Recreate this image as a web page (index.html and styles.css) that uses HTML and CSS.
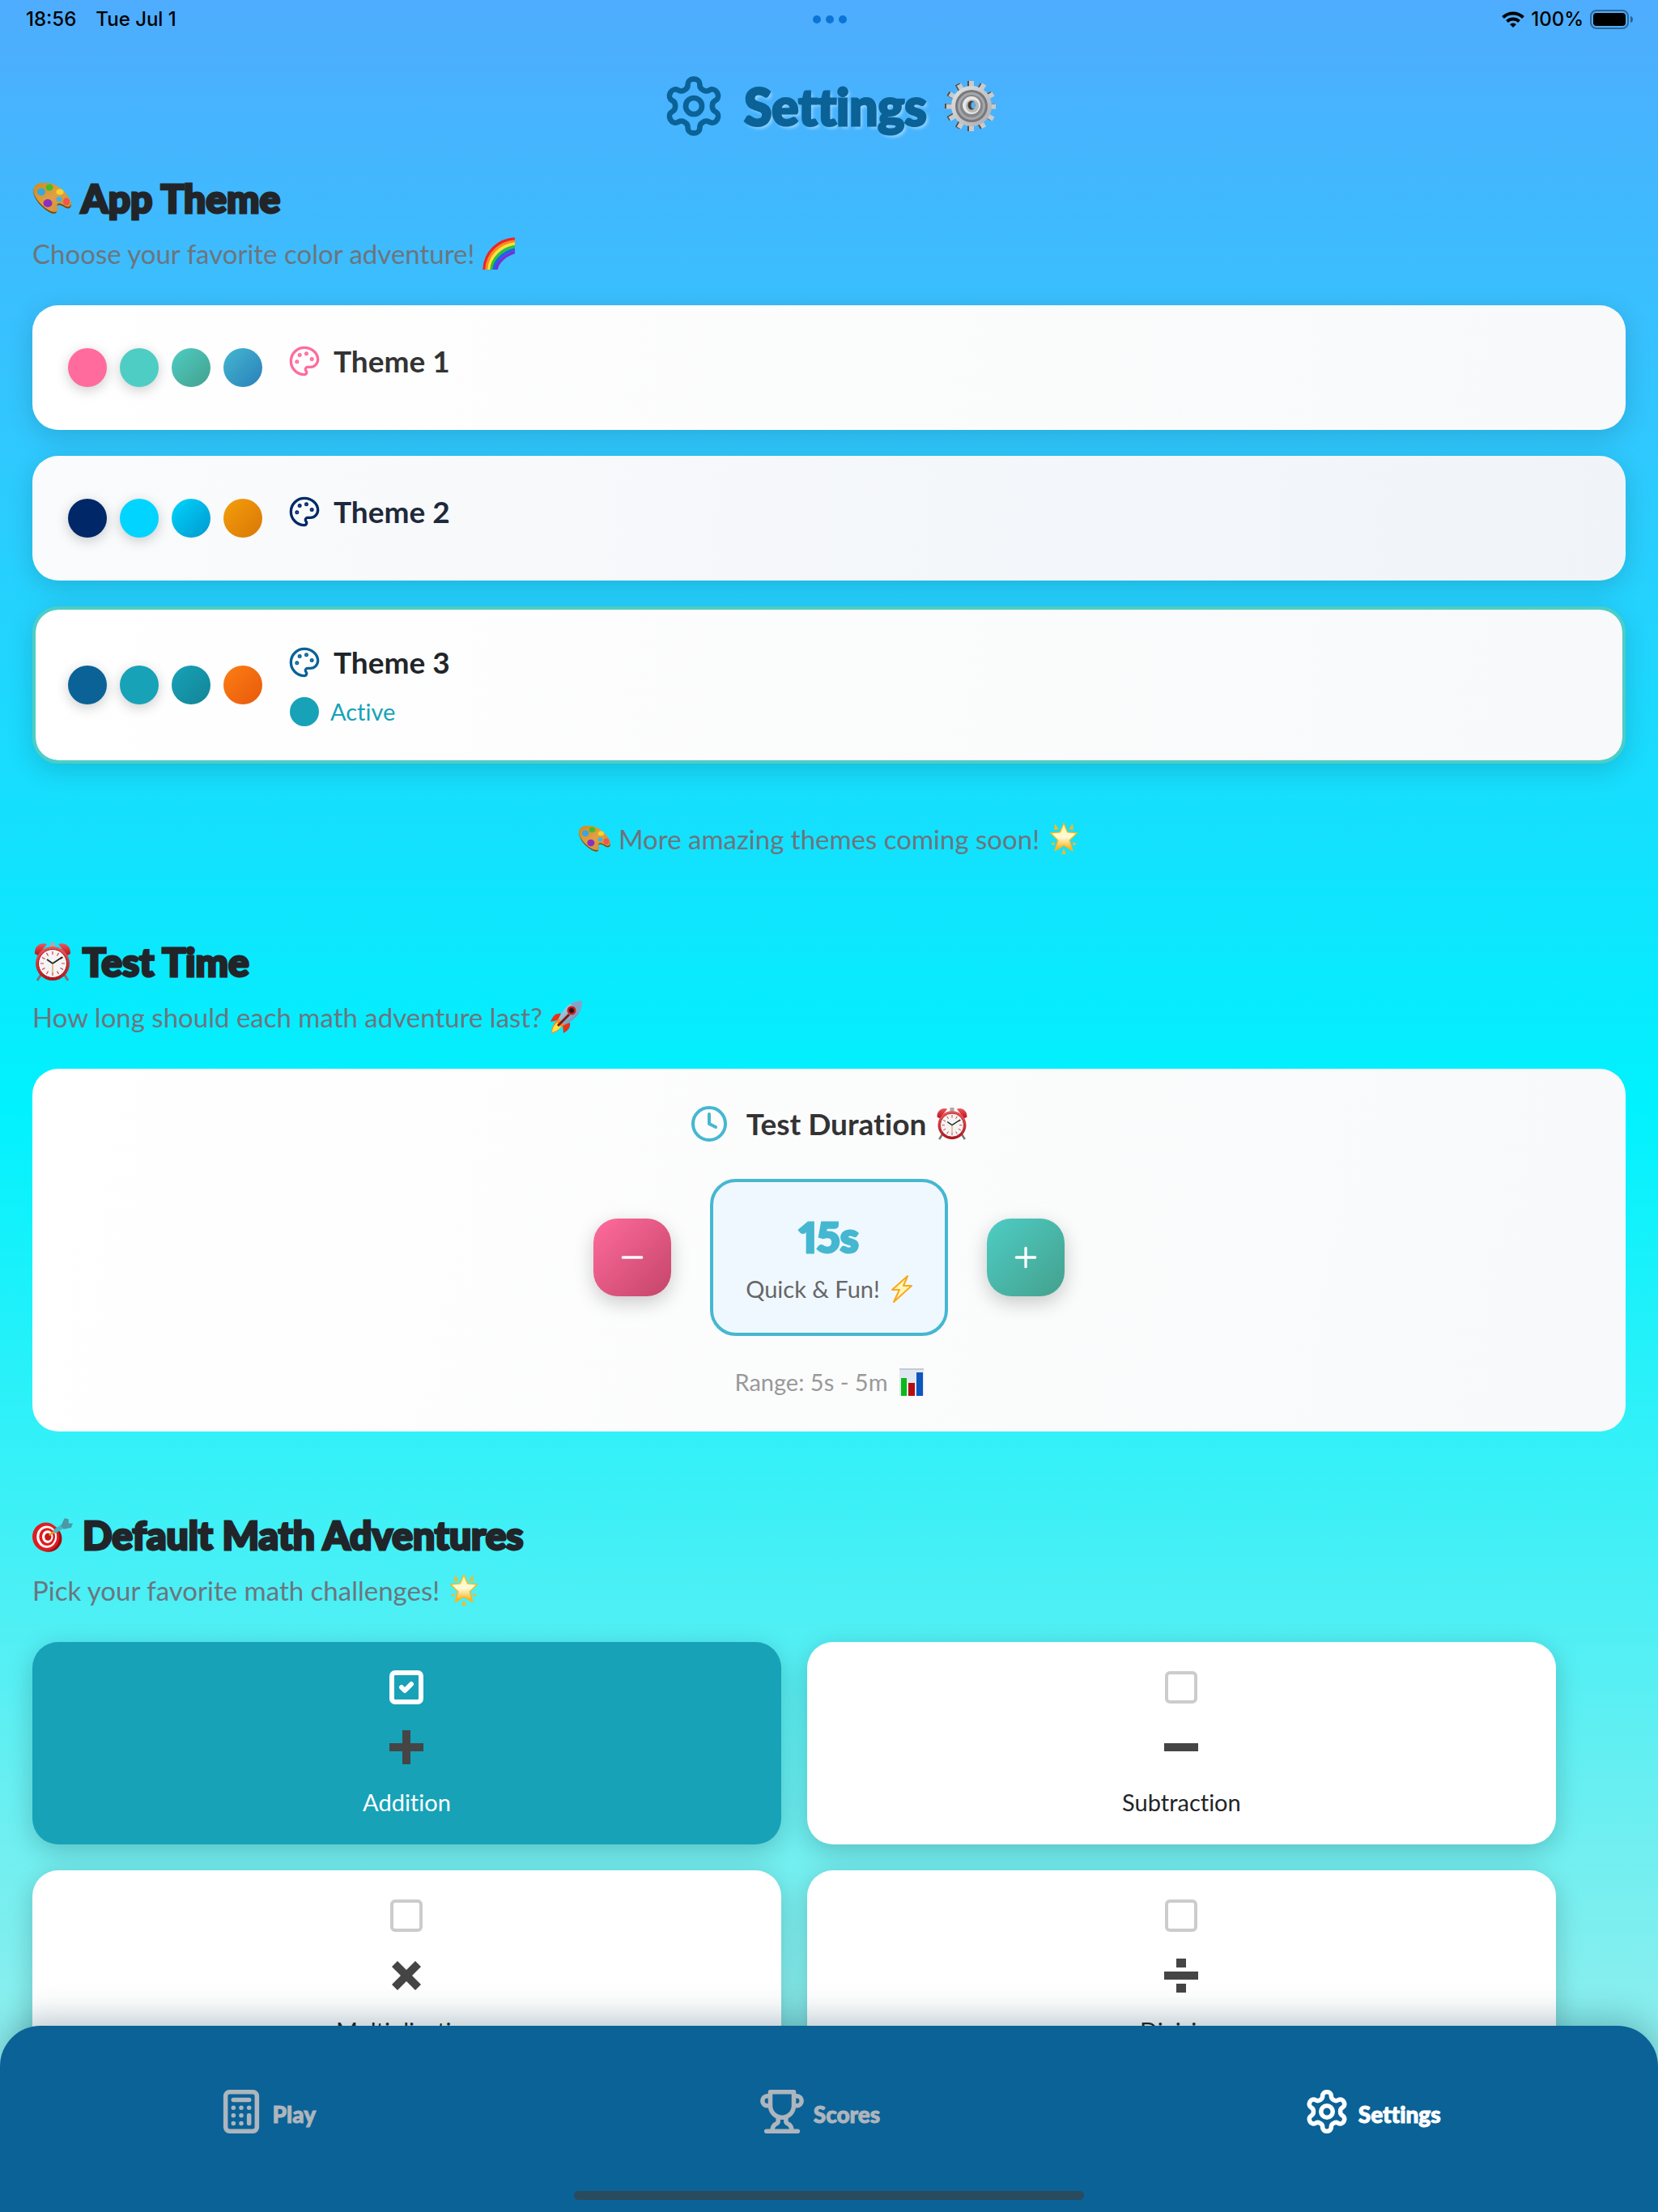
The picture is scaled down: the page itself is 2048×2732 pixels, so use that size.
FILE: index.html
```html
<!DOCTYPE html>
<html lang="en">
<head>
<meta charset="utf-8">
<meta name="viewport" content="width=device-width, initial-scale=1">
<title>Settings</title>
<link rel="stylesheet" href="styles.css">
</head>
<body>
<svg class="sprite" aria-hidden="true">
  <defs>
    <linearGradient id="wood" x1="0" y1="0" x2="1" y2="1"><stop offset="0" stop-color="#d08a1e"/><stop offset=".5" stop-color="#e0a044"/><stop offset="1" stop-color="#c98a35"/></linearGradient>
    <linearGradient id="gold" x1="0" y1="0" x2="0" y2="1"><stop offset="0" stop-color="#fff3a0"/><stop offset=".5" stop-color="#fffbd8"/><stop offset="1" stop-color="#f9a602"/></linearGradient>
    <linearGradient id="steel" x1="0" y1="0" x2="1" y2="1"><stop offset="0" stop-color="#e4e4e6"/><stop offset="1" stop-color="#a9abae"/></linearGradient>
    <linearGradient id="hull" x1="0" y1="0" x2="1" y2="1"><stop offset="0" stop-color="#d8e6f2"/><stop offset="1" stop-color="#4a78a8"/></linearGradient>
    <linearGradient id="bell" x1="0" y1="0" x2="0" y2="1"><stop offset="0" stop-color="#f0565c"/><stop offset="1" stop-color="#b3131a"/></linearGradient>
  </defs>
  <symbol id="i-gear" viewBox="0 0 24 24"><path d="M12.22 2h-.44a2 2 0 0 0-2 2v.18a2 2 0 0 1-1 1.73l-.43.25a2 2 0 0 1-2 0l-.15-.08a2 2 0 0 0-2.73.73l-.22.38a2 2 0 0 0 .73 2.73l.15.1a2 2 0 0 1 1 1.72v.51a2 2 0 0 1-1 1.74l-.15.09a2 2 0 0 0-.73 2.73l.22.38a2 2 0 0 0 2.73.73l.15-.08a2 2 0 0 1 2 0l.43.25a2 2 0 0 1 1 1.73V20a2 2 0 0 0 2 2h.44a2 2 0 0 0 2-2v-.18a2 2 0 0 1 1-1.73l.43-.25a2 2 0 0 1 2 0l.15.08a2 2 0 0 0 2.73-.73l.22-.39a2 2 0 0 0-.73-2.73l-.15-.08a2 2 0 0 1-1-1.74v-.5a2 2 0 0 1 1-1.74l.15-.09a2 2 0 0 0 .73-2.73l-.22-.38a2 2 0 0 0-2.73-.73l-.15.08a2 2 0 0 1-2 0l-.43-.25a2 2 0 0 1-1-1.73V4a2 2 0 0 0-2-2z"/><circle cx="12" cy="12" r="3"/></symbol>
  <symbol id="i-palette" viewBox="0 0 24 24"><g fill="currentColor"><circle cx="13.5" cy="6.5" r=".5"/><circle cx="17.5" cy="10.5" r=".5"/><circle cx="8.5" cy="7.5" r=".5"/><circle cx="6.5" cy="12.5" r=".5"/></g><path d="M12 2C6.5 2 2 6.5 2 12s4.5 10 10 10c.926 0 1.648-.746 1.648-1.688 0-.437-.18-.835-.437-1.125-.29-.289-.438-.652-.438-1.125a1.64 1.64 0 0 1 1.668-1.668h1.996c3.051 0 5.555-2.503 5.555-5.554C21.965 6.012 17.461 2 12 2z"/></symbol>
  <symbol id="i-clock" viewBox="0 0 24 24"><circle cx="12" cy="12" r="10"/><path d="M12 6v6l4 2"/></symbol>
  <symbol id="i-calc" viewBox="0 0 24 24"><rect x="4" y="2" width="16" height="20" rx="2"/><path d="M8 6h8M16 14v4M16 10h.01M12 10h.01M8 10h.01M12 14h.01M8 14h.01M12 18h.01M8 18h.01"/></symbol>
  <symbol id="i-trophy" viewBox="0 0 24 24"><path d="M6 9H4.500a2.500 2.500 0 0 1 0-5H6M18 9h1.500a2.500 2.500 0 0 0 0-5H18M4 22h16M10 14.660V17c0 .55-.47.98-.97 1.210C7.850 18.750 7 20.240 7 22M14 14.660V17c0 .55.47.98.97 1.210C16.150 18.750 17 20.240 17 22M18 2H6v7a6 6 0 0 0 12 0V2Z"/></symbol>

  <symbol id="e-palette" viewBox="0 0 48 38"><path d="M5 3C12-2 25 0 34 7c8 6 13 14 14 20 0 4-4 6-8 3-3-2-7-4-10-2-2 3 1 5 0 8-2 4-9 1-15-4C5 24-4 10 5 3z" fill="#7a4a10"/><path fill-rule="evenodd" d="M5 2C12-3 25-1 34 6c8 6 13 14 14 19 0 4-4 6-8 3-3-2-7-4-9-2-2 3 1 5 0 8-2 4-10 1-16-4C5 22-4 9 5 2z" fill="url(#wood)"/><ellipse cx="33" cy="20" rx="3.500" ry="3" fill="#38b4f0"/><ellipse cx="21" cy="5.500" rx="4.500" ry="4" fill="#3fbf2c"/><ellipse cx="11" cy="11" rx="5" ry="4.500" fill="#35a8e0"/><ellipse cx="34" cy="11" rx="4.500" ry="3.500" fill="#f8d22c"/><ellipse cx="19" cy="25" rx="5.500" ry="5" fill="#8a2fc0"/><ellipse cx="42" cy="23" rx="4" ry="4.500" fill="#f2564c"/></symbol>
  <symbol id="e-rainbow" viewBox="0 0 40 40"><g fill="none" stroke-width="3.500"><path d="M2 40C3 18 20 3 40 2" stroke="#ee2424"/><path d="M5 40C6 20 21 7 40 5" stroke="#ff8a1c"/><path d="M8 40C9 23 23 10 40 8" stroke="#ffe23a"/><path d="M11 40C12 26 25 14 40 11.500" stroke="#2cc52c"/><path d="M14 40C15 28 27 18 40 15" stroke="#1c62ee"/><path d="M17 40C18 31 28 22 40 18.500" stroke="#7a2fd0"/></g></symbol>
  <symbol id="e-star" viewBox="0 0 40 44"><path d="M20 1l5 12 13 1-10 10 4 14-12-7-12 7 4-14L2 14l13-1z" fill="url(#gold)" stroke="#f6b81c" stroke-width="1.500" stroke-linejoin="round"/><path d="M8 1l5 8-6 1zM32 1l-5 8 6 1zM20 35l3 8h-6zM2 29l6-3-1 5zM38 29l-6-3 1 5z" fill="#fbb726"/></symbol>
  <symbol id="e-alarm" viewBox="0 0 46 48"><path d="M9 39l-5 8M37 39l5 8" stroke="#777" stroke-width="3"/><rect x="20" y="0" width="6" height="6" fill="#aaa"/><path d="M1 14C0 5 8-1 16 2L5 16zM45 14C46 5 38-1 30 2l11 14z" fill="url(#bell)"/><circle cx="23" cy="26" r="21" fill="url(#bell)"/><circle cx="23" cy="26" r="17.500" fill="#f4f4f4" stroke="#8f1116" stroke-width="1"/><g stroke="#d8383c" stroke-width="1.200"><path d="M23 11v4M23 37v4M8 26h4M34 26h4M15.500 13l2 3.500M30.500 13l-2 3.500M15.500 39l2-3.500M30.500 39l-2-3.500M10 18.500l3.500 2M36 18.500l-3.500 2M10 33.500l3.500-2M36 33.500l-3.500-2"/></g><path d="M16 21l7 5 12-8" fill="none" stroke="#222" stroke-width="1.800"/><path d="M23 26v11" stroke="#d89a50" stroke-width="1.200"/></symbol>
  <symbol id="e-rocket" viewBox="0 0 40 40"><path d="M13 16C6 15 3 19 0 26l9-2zM24 27c1 7-3 10-8 13l-1-10z" fill="#e8321c"/><path d="M39 0C26 0 18 7 10 22l7 8C32 23 39 14 39 0z" fill="url(#hull)"/><path d="M39 0c-6 0-10 1-14 4l10 10c3-4 4-8 4-14z" fill="#7fa4c8"/><circle cx="26" cy="12" r="5.500" fill="#c8201c"/><circle cx="26" cy="12" r="3" fill="#241418"/><path d="M10 22l7 8c-2 1-5 3-8 7-2 2-6 3-8 3 0-6 3-13 9-18z" fill="#fb8b1c"/><path d="M8 27l5 5c-3 4-7 6-11 7 0-4 2-8 6-12z" fill="#ffe14a"/><path d="M23 17L9 31" stroke="#7a1c14" stroke-width="3"/></symbol>
  <symbol id="e-bolt" viewBox="0 0 26 34"><path d="M20 1L1 18h9L3 33l22-20H15z" fill="#fff6b8" stroke="#f9a91c" stroke-width="2" stroke-linejoin="round"/></symbol>
  <symbol id="e-chart" viewBox="0 0 30 34"><path d="M0 0h30v34H0z" fill="#dfe8f0"/><path d="M0 1h30" stroke="#c4ccd2" stroke-width="2"/><path d="M2 12h7v22H2z" fill="#0cb818"/><path d="M11 18h8v16h-8z" fill="#b80c14"/><path d="M21 5h8v29h-8z" fill="#0c56c0"/></symbol>
  <symbol id="e-target" viewBox="0 0 48 42"><ellipse cx="19" cy="25" rx="16" ry="16" fill="#a00c10"/><ellipse cx="16" cy="23" rx="16" ry="17" fill="#e01c20"/><ellipse cx="17" cy="23" rx="12" ry="13" fill="#fff"/><ellipse cx="17.500" cy="23" rx="9.500" ry="10.500" fill="#e01c20"/><ellipse cx="18" cy="23" rx="6.500" ry="7.500" fill="#fff"/><ellipse cx="18.500" cy="23" rx="4" ry="4.500" fill="#c8161a"/><path d="M20 21L43 6" stroke="#e0a020" stroke-width="2.500"/><path d="M26 17l15-10" stroke="#45b8c8" stroke-width="5"/><path d="M34 10l4-9 5 1v5l5 0-2 5-9 2z" fill="#4c98a6"/></symbol>
  <symbol id="e-gear" viewBox="0 0 64 64"><g stroke="#5a4c40" stroke-width="6"><path d="M31 1v62M0 32h62M15.500 5l31 54M4 47.500l54-31M4 16.500l54 31M15.500 59l31-54"/></g><g stroke="#c9cacc" stroke-width="6"><path d="M33 1v62M2 32.500h61M17.500 5.500l31 53M6 48l54-31M6 17l54 31M17.500 59l31-54"/></g><circle cx="33" cy="32" r="25" fill="url(#steel)"/><circle cx="33" cy="32" r="20" fill="#77797c"/><circle cx="33" cy="32" r="17" fill="#a5a7aa"/><circle cx="33" cy="32" r="14" fill="#85878a"/><circle cx="33" cy="31" r="11" fill="#e6e6e8"/><circle cx="34" cy="32" r="8" fill="#b6b8ba"/><ellipse cx="33" cy="31" rx="4.500" ry="5.500" fill="#4a3f38"/><ellipse cx="35" cy="31" rx="2.500" ry="4" fill="#54b4f8"/></symbol>
</svg>

<div class="app">
  <div class="status">
    <div class="status-left"><span>18:56</span><span>Tue Jul 1</span></div>
    <div class="dots"><i></i><i></i><i></i></div>
    <div class="status-right">
      <svg class="wifi" viewBox="0 0 28 20"><g fill="none" stroke="#000" stroke-width="4"><path d="M1.500 7.500a18 18 0 0 1 25 0"/><path d="M6.500 12.500a11 11 0 0 1 15 0"/></g><path d="M10 16a6 6 0 0 1 8 0l-4 4z"/></svg>
      <span>100%</span>
      <svg class="battery" viewBox="0 0 54 24"><rect x="1" y="1" width="46" height="22" rx="7" fill="none" stroke="#000" stroke-opacity=".4" stroke-width="2"/><rect x="4" y="4" width="40" height="16" rx="4"/><path d="M50 8c4 1 4 7 0 8z" fill-opacity=".45"/></svg>
    </div>
  </div>

  <main class="content">
    <header class="page-head">
      <svg class="line head-icon" aria-hidden="true"><use href="#i-gear"/></svg>
      <h1 class="display">Settings</h1>
      <svg class="head-emoji" role="img" aria-label="gear"><use href="#e-gear"/></svg>
    </header>

    <section class="section">
      <h2 class="display"><svg class="emoji-palette" aria-hidden="true"><use href="#e-palette"/></svg>App Theme</h2>
      <p class="lead">Choose your favorite color adventure! <svg class="emoji" aria-hidden="true"><use href="#e-rainbow"/></svg></p>
      <div class="themes">
        <button type="button" class="card theme theme-1">
          <span class="swatches"><i></i><i></i><i></i><i></i></span>
          <span class="theme-info"><span class="theme-name"><svg class="line icon" aria-hidden="true"><use href="#i-palette"/></svg>Theme 1</span></span>
        </button>
        <button type="button" class="card theme theme-2">
          <span class="swatches"><i></i><i></i><i></i><i></i></span>
          <span class="theme-info"><span class="theme-name"><svg class="line icon" aria-hidden="true"><use href="#i-palette"/></svg>Theme 2</span></span>
        </button>
        <button type="button" class="card theme theme-3 is-active" aria-pressed="true">
          <span class="swatches"><i></i><i></i><i></i><i></i></span>
          <span class="theme-info"><span class="theme-name"><svg class="line icon" aria-hidden="true"><use href="#i-palette"/></svg>Theme 3</span><span class="theme-state">Active</span></span>
        </button>
      </div>
      <p class="lead more"><svg class="emoji-inline" aria-hidden="true"><use href="#e-palette"/></svg>More amazing themes coming soon! <svg class="emoji" aria-hidden="true"><use href="#e-star"/></svg></p>
    </section>

    <section class="section">
      <h2 class="display"><svg class="emoji-head" aria-hidden="true"><use href="#e-alarm"/></svg>Test Time</h2>
      <p class="lead">How long should each math adventure last? <svg class="emoji" aria-hidden="true"><use href="#e-rocket"/></svg></p>
      <div class="card duration">
        <h3><svg class="line clock" aria-hidden="true"><use href="#i-clock"/></svg>Test Duration<svg class="emoji" aria-hidden="true"><use href="#e-alarm"/></svg></h3>
        <div class="stepper">
          <button type="button" class="step step-minus" aria-label="Decrease"><svg class="line icon" viewBox="0 0 24 24"><path d="M5 12h14"/></svg></button>
          <div class="value">
            <strong class="display">15s</strong>
            <span class="value-note">Quick &amp; Fun! <svg class="emoji-bolt" aria-hidden="true"><use href="#e-bolt"/></svg></span>
          </div>
          <button type="button" class="step step-plus" aria-label="Increase"><svg class="line icon" viewBox="0 0 24 24"><path d="M5 12h14M12 5v14"/></svg></button>
        </div>
        <p class="range">Range: 5s - 5m <svg class="emoji-chart" aria-hidden="true"><use href="#e-chart"/></svg></p>
      </div>
    </section>

    <section class="section">
      <h2 class="display"><svg class="emoji-head" aria-hidden="true"><use href="#e-target"/></svg>Default Math Adventures</h2>
      <p class="lead">Pick your favorite math challenges! <svg class="emoji" aria-hidden="true"><use href="#e-star"/></svg></p>
      <div class="ops">
        <label class="op">
          <span class="tick"><input type="checkbox" checked><svg viewBox="0 0 24 24" aria-hidden="true"><path d="m9 12 2 2 4-4"/></svg></span>
          <svg class="sign" viewBox="0 0 44 44" aria-hidden="true"><path d="M1 17h16V1h10v16h16v10H27v16H17V27H1z"/></svg>
          <span>Addition</span>
        </label>
        <label class="op">
          <span class="tick"><input type="checkbox"></span>
          <svg class="sign" viewBox="0 0 44 44" aria-hidden="true"><path d="M1 17h42v10H1z"/></svg>
          <span>Subtraction</span>
        </label>
        <label class="op">
          <span class="tick"><input type="checkbox"></span>
          <svg class="sign" viewBox="0 0 44 44" aria-hidden="true"><path d="M4 11l7-7 11 11L33 4l7 7-11 11 11 11-7 7-11-11-11 11-7-7 11-11z"/></svg>
          <span>Multiplication</span>
        </label>
        <label class="op">
          <span class="tick"><input type="checkbox"></span>
          <svg class="sign" viewBox="0 0 44 44" aria-hidden="true"><path d="M1 17h42v10H1zM16 1h12v11H16zM16 32h12v11H16z"/></svg>
          <span>Division</span>
        </label>
      </div>
    </section>
  </main>

  <nav class="tabs">
    <a class="tab" href="#play"><svg class="line tab-icon" aria-hidden="true"><use href="#i-calc"/></svg><span class="display">Play</span></a>
    <a class="tab" href="#scores"><svg class="line tab-icon" aria-hidden="true"><use href="#i-trophy"/></svg><span class="display">Scores</span></a>
    <a class="tab is-current" href="#settings" aria-current="page"><svg class="line tab-icon" aria-hidden="true"><use href="#i-gear"/></svg><span class="display">Settings</span></a>
    <div class="home-bar"></div>
  </nav>
</div>
</body>
</html>
```
FILE: styles.css
```css
*, *::before, *::after { box-sizing: border-box; }

:root {
  --ink: #212529;
  --muted: #6c757d;
  --navy: #0a6297;
  --teal: #17a2b8;
  --mint: #4ecdc4;
  --sky: #45b7d1;
}

body {
  margin: 0;
  font-family: Lato, "Noto Sans", sans-serif;
  font-variant-ligatures: none;
  color: var(--ink);
}

h1, h2, h3, p { margin: 0; }

button { font: inherit; font-variant-ligatures: none; color: inherit; }

svg { display: block; flex: none; }

.sprite { position: absolute; width: 0; height: 0; }

.app {
  position: relative;
  height: 100vh;
  overflow: hidden;
  background: linear-gradient(180deg, #4facfe 0%, #00f2fe 50%, #a8edea 100%);
}

.display {
  font-family: Lato, "Noto Sans", sans-serif;
  font-weight: 900;
  font-variant-numeric: proportional-nums;
  -webkit-text-stroke: 3px currentColor;
  stroke-linejoin: round;
}

.line {
  fill: none;
  stroke: currentColor;
  stroke-width: 2;
  stroke-linecap: round;
  stroke-linejoin: round;
}

.icon { width: 40px; height: 40px; }

.emoji { width: 40px; height: 40px; }
.emoji-inline { width: 40px; height: 32px; }
.emoji-palette { width: 48px; height: 38px; }
.emoji-head { width: 50px; height: 48px; }
.emoji-bolt { width: 26px; height: 34px; }
.emoji-chart { width: 30px; height: 34px; }

/* Status bar */
.status {
  display: grid;
  grid-template-columns: 1fr auto 1fr;
  align-items: center;
  height: 48px;
  padding: 0 30px 0 32px;
  font: 500 24px/30px Inter, "Noto Sans", sans-serif;
  color: #000;
}
.status-left { display: flex; gap: 24px; }
.status-right { display: flex; align-items: center; justify-content: flex-end; gap: 8px; }
.dots { display: flex; gap: 6px; }
.dots i { width: 10px; height: 10px; border-radius: 50%; background: #0b75d5; }
.wifi { width: 28px; height: 20px; }
.battery { width: 54px; height: 24px; }

/* Page */
.content { padding: 0 40px; }

.page-head {
  display: flex;
  align-items: center;
  justify-content: center;
  gap: 22px;
  padding: 43px 0 44px;
  color: var(--navy);
}
.page-head h1 {
  font-size: 62px;
  line-height: 80px;
  text-shadow: 3px 3px 4px rgba(255, 255, 255, .5);
}
.head-icon { width: 80px; height: 80px; }
.head-emoji { width: 64px; height: 64px; }

.section { margin-bottom: 98px; }

.section h2 {
  display: flex;
  align-items: center;
  gap: 12px;
  margin-bottom: 16px;
  font-size: 48px;
  line-height: 60px;
}

.lead {
  display: flex;
  align-items: center;
  gap: 10px;
  margin-bottom: 42px;
  font-size: 33px;
  line-height: 44px;
  color: var(--muted);
}
.more { justify-content: center; margin: 69px 0 0; line-height: 48px; }

.card {
  border: 4px solid transparent;
  border-radius: 32px;
  padding: 40px;
  background: linear-gradient(95deg, #fff, #f8f9fa) border-box;
}

/* Themes */
.themes { display: flex; flex-direction: column; gap: 32px; }
.theme {
  display: flex;
  align-items: center;
  gap: 32px;
  width: 100%;
  text-align: left;
  box-shadow: 0 8px 32px rgba(0, 0, 0, .15);
}
.theme.is-active { border-color: var(--mint); background-clip: padding-box; }
.swatches { display: flex; gap: 16px; }
.swatches i { width: 48px; height: 48px; border-radius: 50%; }
.swatches i:nth-child(-n+2) { box-shadow: 0 4px 16px rgba(0, 0, 0, .2); }
.theme-name {
  display: flex;
  align-items: center;
  gap: 16px;
  margin-bottom: 16px;
  font-size: 37px;
  font-weight: 700;
  line-height: 50px;
}
.theme-state {
  display: flex;
  align-items: center;
  gap: 14px;
  font-size: 29px;
  line-height: 40px;
  color: var(--teal);
}
.theme-state::before {
  content: "";
  width: 36px;
  height: 36px;
  margin-left: 2px;
  border-radius: 50%;
  background: var(--teal);
}

.theme-1 { color: #333; }
.theme-1 .icon { color: #ff6b9d; }
.theme-1 i:nth-child(1) { background: #ff6b9d; }
.theme-1 i:nth-child(2) { background: #4ecdc4; }
.theme-1 i:nth-child(3) { background: linear-gradient(135deg, #4ecdc4, #44a08d); }
.theme-1 i:nth-child(4) { background: linear-gradient(135deg, #45b7d1, #2980b9); }

.theme-2 { color: #1e293b; background-image: linear-gradient(95deg, #fafbfc, #f0f4f9); }
.theme-2 .icon { color: #002868; }
.theme-2 i:nth-child(1) { background: #002868; }
.theme-2 i:nth-child(2) { background: #00d4ff; }
.theme-2 i:nth-child(3) { background: linear-gradient(135deg, #00d4ff, #0099cc); }
.theme-2 i:nth-child(4) { background: linear-gradient(135deg, #f59e0b, #d97706); }

.theme-3 { color: var(--ink); }
.theme-3 .icon { color: var(--navy); }
.theme-3 i:nth-child(1) { background: var(--navy); }
.theme-3 i:nth-child(2) { background: var(--teal); }
.theme-3 i:nth-child(3) { background: linear-gradient(135deg, #17a2b8, #138496); }
.theme-3 i:nth-child(4) { background: linear-gradient(135deg, #fd7e14, #e8590c); }

/* Test duration */
.duration {
  display: flex;
  flex-direction: column;
  align-items: center;
  background-image: linear-gradient(103deg, #fff, #f8f9fa);
}
.duration h3 {
  display: flex;
  align-items: center;
  gap: 12px;
  margin-bottom: 44px;
  font-size: 37px;
  line-height: 48px;
  color: #333;
}
.clock { width: 48px; height: 48px; margin-right: 10px; color: var(--sky); }
.stepper { display: flex; align-items: center; gap: 48px; margin-bottom: 40px; }
.step {
  display: grid;
  place-items: center;
  width: 96px;
  height: 96px;
  padding: 0;
  border: 0;
  border-radius: 30px;
  color: #fff;
  box-shadow: 0 8px 24px rgba(0, 0, 0, .2);
}
.step-minus { background: linear-gradient(135deg, #ff6b9d, #c44569); }
.step-plus { background: linear-gradient(135deg, #4ecdc4, #44a08d); }
.value {
  display: flex;
  flex-direction: column;
  align-items: center;
  gap: 12px;
  padding: 34px 40px;
  border: 4px solid var(--sky);
  border-radius: 32px;
  background: #f0f8ff;
}
.value strong { font-size: 52px; line-height: 66px; color: var(--sky); }
.value-note, .range {
  display: flex;
  align-items: center;
  gap: 14px;
  font-size: 29px;
  line-height: 40px;
  color: #666;
}
.range { line-height: 34px; color: #999; }

/* Math operations */
.ops {
  display: grid;
  grid-template-columns: 47% 47%;
  gap: 32px;
}
.op {
  display: flex;
  flex-direction: column;
  align-items: center;
  gap: 28px;
  padding: 32px 32px 34px;
  border-radius: 32px;
  background: #fff;
  box-shadow: 0 8px 32px rgba(0, 0, 0, .2);
  font-size: 29px;
  line-height: 36px;
}
.op:has(:checked) { background: var(--teal); color: #fff; }
.tick { display: grid; place-items: center; width: 48px; height: 48px; }
.tick > * { grid-area: 1 / 1; }
.tick input {
  appearance: none;
  width: 40px;
  height: 40px;
  margin: 0;
  border: 4px solid #ccc;
  border-radius: 6px;
}
.tick input:checked { width: 42px; height: 42px; border: 6px solid #fff; border-radius: 7px; }
.tick svg {
  width: 48px;
  height: 48px;
  fill: none;
  stroke: #fff;
  stroke-width: 3;
  stroke-linecap: round;
  stroke-linejoin: round;
}
.sign { width: 44px; height: 44px; fill: #454545; }

/* Tab bar */
.tabs {
  position: absolute;
  inset: auto 0 0;
  display: grid;
  grid-template-columns: repeat(3, 1fr);
  padding: 77px 0 15px;
  border-radius: 50px 50px 0 0;
  background: var(--navy);
  box-shadow: 0 -8px 40px rgba(10, 60, 80, .3);
}
.tab {
  display: flex;
  align-items: center;
  justify-content: center;
  gap: 10px;
  padding-right: 24px;
  font-size: 28px;
  line-height: 36px;
  color: #adb5bd;
  text-decoration: none;
}
.tab .display { margin-top: 6px; -webkit-text-stroke-width: 1px; }
.tab-icon { width: 58px; height: 58px; stroke-width: 2.3; }
.tab.is-current { color: #fff; }
.home-bar {
  grid-column: 1 / -1;
  justify-self: center;
  width: 630px;
  max-width: 60%;
  height: 11px;
  margin-top: 69px;
  border-radius: 6px;
  background: #2a4a5e;
}
```
